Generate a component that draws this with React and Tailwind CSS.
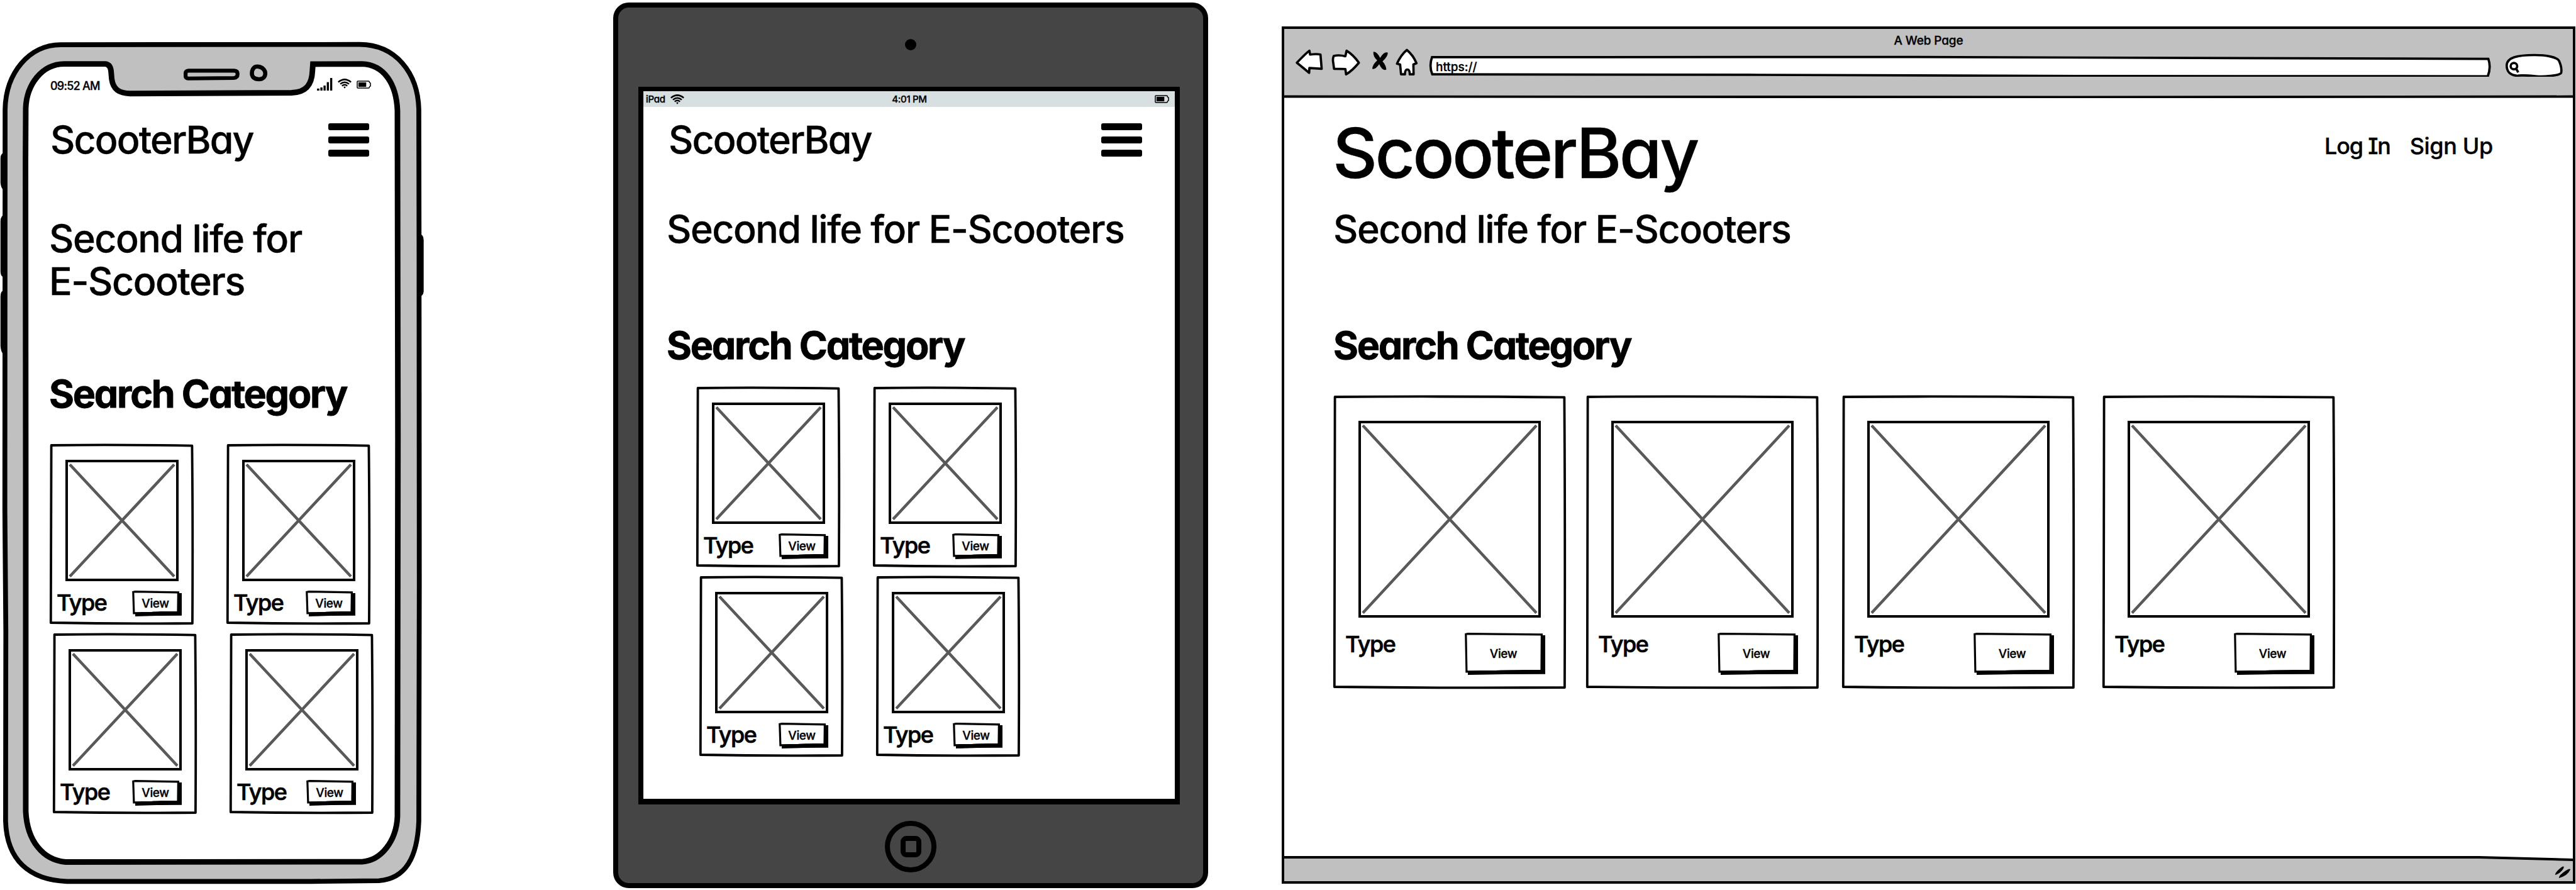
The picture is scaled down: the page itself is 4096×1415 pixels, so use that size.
import React from "react";

function Wifi() {
  return (
    <svg className="h-[16px] w-[22px]" viewBox="0 0 22 16" fill="none" stroke="#000" strokeWidth="2.5">
      <path d="M0.8 5.6 Q11 -2.8 21.2 5.6" />
      <path d="M4 8.6 Q11 2.8 18 8.6" />
      <path d="M6.8 11.6 Q11 8 15.2 11.6" />
      <path d="M9.2 13.2 Q11 12 12.8 13.2 L11 15.8Z" fill="#000" stroke="none" />
    </svg>
  );
}

function Battery() {
  return (
    <svg className="h-[13px] w-[23px]" viewBox="0 0 23 13" fill="none" stroke="#000">
      <path d="M2 1 H19 Q20.4 1 20.4 3 L22 4.2 V8.8 L20.4 10 Q20.4 12 19 12 H2 Q1 12 1 11 V2 Q1 1 2 1Z" strokeWidth="1.5" />
      <rect x="2.9" y="2.9" width="12.4" height="7.2" fill="#000" stroke="none" />
    </svg>
  );
}

function Signal() {
  return (
    <svg className="h-[20px] w-[25px]" viewBox="0 0 25 20">
      <rect x="0" y="16.8" width="3.8" height="3.2" />
      <rect x="5.4" y="15" width="3.4" height="5" />
      <rect x="10.4" y="12" width="3.4" height="8" />
      <rect x="15.6" y="6.6" width="3.4" height="13.4" />
      <rect x="20.9" y="0" width="3.4" height="20" />
    </svg>
  );
}

function Hamburger() {
  return (
    <div className="mt-[4px] flex w-[65px] flex-col gap-[10px]">
      <div className="h-[11px] rounded-[3px] bg-black" />
      <div className="h-[11px] rounded-[3px] bg-black" />
      <div className="h-[11px] rounded-[3px] bg-black" />
    </div>
  );
}

function SketchBorder({ w, h }) {
  const d = `M2.6 2 Q${w * 0.45} 0.7 ${w - 2.6} 2.6 Q${w - 1.2} ${h * 0.45} ${w - 2.1} ${h - 2} Q${w * 0.5} ${h - 0.8} 1.8 ${h - 3} Q2.6 ${h * 0.5} 2.6 2Z`;
  return (
    <svg className="absolute inset-0 h-full w-full overflow-visible" viewBox={`0 0 ${w} ${h}`} fill="none" stroke="#000" strokeWidth="3.8" strokeLinejoin="round">
      <path d={d} />
    </svg>
  );
}

function Placeholder({ w, h, className }) {
  return (
    <div className={"border-4 border-black " + className}>
      <svg className="h-full w-full" viewBox={`4 4 ${w - 8} ${h - 8}`} stroke="#595959" strokeWidth="4.6">
        <path d={`M7 7.5 L${w - 7} ${h - 7.5} M${w - 7} 7.5 L7 ${h - 7.5}`} />
      </svg>
    </div>
  );
}

function ViewButton({ w, h, className }) {
  return (
    <button className={"relative flex justify-center pr-[5px] text-[19px] leading-none tracking-[-0.02em] " + className}>
      <svg className="absolute inset-0 h-full w-full" viewBox={`0 0 ${w} ${h}`}>
        <path d={`M5 4 H${w} V${h - 1.2} L${w * 0.5} ${h - 1} L5 ${h}Z`} />
        <path
          d={`M1.8 2.3 L5 1.6 L${w - 5.6} 2.8 L${w - 6} ${h - 6.4} Q${w * 0.5} ${h - 6.8} ${w * 0.4} ${h - 5.6} L2.9 ${h - 5.2}Z`}
          fill="#fff"
          stroke="#000"
          strokeWidth="3.2"
        />
      </svg>
      <span className="relative">View</span>
    </button>
  );
}

function SmallCard({ shift }) {
  return (
    <div className="relative h-[287px] w-[229px] pt-[25px]">
      <SketchBorder w={229} h={287} />
      <Placeholder w={180} h={193} className="ml-[25px] h-[193px] w-[180px]" />
      <div className={"mt-[15px] flex justify-between pl-[11px] " + shift}>
        <span className="pt-px text-[36px] leading-none tracking-[-0.042em] [-webkit-text-stroke:0.7px_#000]">Type</span>
        <ViewButton w={79} h={41} className="h-[41px] w-[79px] pt-[11px]" />
      </div>
    </div>
  );
}

function SmallCardRows() {
  return (
    <div className="flex flex-col gap-[14px]">
      <div className="flex gap-[52px]">
        <SmallCard shift="pr-[19px]" />
        <SmallCard shift="pr-[24px]" />
      </div>
      <div className="flex gap-[52px] pl-[5px]">
        <SmallCard shift="pr-[24px]" />
        <SmallCard shift="pr-[28px]" />
      </div>
    </div>
  );
}

function LargeCard() {
  return (
    <div className="relative h-[466px] w-[370px] pt-[40px]">
      <SketchBorder w={370} h={466} />
      <Placeholder w={290} h={313} className="ml-[40px] h-[313px] w-[290px]" />
      <div className="mt-[24px] flex justify-between pr-[33px] pl-[19px]">
        <span className="text-[36px] leading-none tracking-[-0.042em] [-webkit-text-stroke:0.7px_#000]">Type</span>
        <ViewButton w={128} h={67} className="h-[67px] w-[128px] pt-[24px]" />
      </div>
    </div>
  );
}

function PhoneFrame() {
  return (
    <svg className="absolute top-0 left-0 h-[1415px] w-[680px]" viewBox="0 0 880.2 1831.6" fill="none" stroke="#000" strokeWidth="10">
      <path d="M12 313 Q1 314 1 326 V376 Q2 386 6 390 H12Z M12 441 Q1 442 1 456 V558 Q1 568 6 570 H12Z M12 596 Q1 597 1 610 V712 Q2 724 6 728 H12Z M860 481 Q872 481 872 494 V600 Q871 609 864 610 H860Z" fill="#000" stroke="none" />
      <path d="M10.500 225 C12 150 60 92 125 92 L740 91.500 C815 92 860 150 862 225 L862.500 500 L863 1200 L862 1690 C859 1765 835 1808 780 1812.500 L640 1814 L138 1814 C60 1811 14 1770 11.500 1690 L12 1300 L10 1050Z" fill="#c0c0c0" />
      <path
        d="M53 222 C55 175 85 132 132 131.500 L216 131.500 Q227 132 228.500 146 L230 163 C233 184 245 192 268 192.500 L600 191 C632 190 642 172 643 146 L644 132 L745 131.500 C790 133 816 172 818 228 L819 900 L818 1680 C816 1730 785 1771 745 1773.500 L135 1774 C88 1770 56 1730 53 1670 L53 1000 L52.500 330Z"
        fill="#fff"
        strokeWidth="11.500"
      />
      <path d="M388 145.500 H482 Q489 146 489 152 Q489 160 481 160.500 L388 161.500 Q382 161 382 157 V151 Q382 146 388 145.500Z" strokeWidth="8" />
      <path d="M531 137 C540 138 546 144 546 151 C546 158 541 163 533 163 C523 163 518 158 518.500 150 C519 141 524 136 531 137Z" strokeWidth="8.500" />
    </svg>
  );
}

function Phone() {
  return (
    <section className="relative h-[1415px] w-[680px] shrink-0">
      <PhoneFrame />
      <div className="relative pt-[124px]">
        <div className="flex h-[20px] items-start justify-between pr-[90px] pl-[80px]">
          <span className="pt-[4px] text-[18px] leading-none tracking-[-0.042em]">09:52 AM</span>
          <div className="flex h-[20px] gap-[8px]">
            <Signal />
            <span className="pt-[1px]"><Wifi /></span>
            <span className="pt-[4px]"><Battery /></span>
          </div>
        </div>
        <div className="mt-[48px] flex justify-between pr-[93px] pl-[80px]">
          <h1 className="text-[61px] leading-none tracking-[-0.031em]">ScooterBay</h1>
          <Hamburger />
        </div>
        <p className="mt-[92px] pl-[78px] text-[61px] leading-[68px] tracking-[-0.0245em]">
          Second life for
          <br />
          E-Scooters
        </p>
        <h2 className="mt-[115px] pl-[78px] text-[61px] leading-none font-bold tracking-[-0.0365em] [-webkit-text-stroke:0.8px_#000]">Search Category</h2>
        <div className="mt-[49px] pl-[79px]">
          <SmallCardRows />
        </div>
      </div>
    </section>
  );
}

function Tablet() {
  return (
    <section className="mt-[4px] ml-[295px] flex h-[1408px] w-[946px] shrink-0 flex-col items-center rounded-[25px] border-8 border-black bg-[#454545]">
      <div className="h-[126px] w-[18px] pt-[50px]">
        <div className="h-[18px] w-[18px] rounded-full bg-black" />
      </div>
      <div className="mr-[5px] h-[1141px] w-[861px] border-x-8 border-t-[7px] border-b-[9px] border-black bg-white">
        <div className="grid h-[25px] grid-cols-3 items-center bg-[#d7dfe1] pr-[9px] pl-[4px] text-[15px] leading-none tracking-[-0.02em]">
          <div className="flex items-center gap-[8px]">
            <span>iPad</span>
            <Wifi />
          </div>
          <span className="pl-[6px] text-center">4:01 PM</span>
          <div className="flex justify-end">
            <Battery />
          </div>
        </div>
        <div className="mt-[22px] flex justify-between pr-[52px] pl-[40px]">
          <h1 className="text-[61px] leading-none tracking-[-0.031em]">ScooterBay</h1>
          <Hamburger />
        </div>
        <p className="mt-[81px] pl-[37px] text-[61px] leading-none tracking-[-0.0245em] whitespace-nowrap">Second life for E-Scooters</p>
        <h2 className="mt-[124px] pl-[37px] text-[61px] leading-none font-bold tracking-[-0.0365em] [-webkit-text-stroke:0.8px_#000]">Search Category</h2>
        <div className="mt-[35px] pl-[84px]">
          <SmallCardRows />
        </div>
      </div>
      <div className="mt-[26px] flex h-[82px] w-[82px] items-center justify-center rounded-full border-8 border-black">
        <div className="h-[34px] w-[33px] rounded-[9px] border-8 border-black" />
      </div>
    </section>
  );
}

function BrowserHeader() {
  return (
    <header className="relative h-[110px] shrink-0 bg-[#c1c1c1] pt-[9px]">
      <div className="text-center text-[19px] leading-none tracking-[-0.008em]">A Web Page</div>
      <div className="mt-[2px] flex h-[46px] pl-[16px]">
        <svg className="w-[48px]" viewBox="2664 98 62 60" fill="#fff" stroke="#000" strokeWidth="4.8" strokeLinejoin="round">
          <path d="M2669 129 Q2686 111 2695 104 L2696.500 112 Q2710 110 2718 112 L2720.500 141.500 L2695 140 L2694.500 150 Q2684 141 2669 129Z" />
        </svg>
        <svg className="ml-[9px] w-[50px]" viewBox="2738 98 64 60" fill="#fff" stroke="#000" strokeWidth="4.800" strokeLinejoin="round">
          <path d="M2797 129 Q2786 113 2771.500 104 L2769 115.500 Q2755 112 2745 115 Q2742 120 2744 130 L2745.500 141.500 L2769 142 L2770.500 153 Q2783 146 2797 129Z" />
        </svg>
        <svg className="ml-[14px] w-[31px]" viewBox="2820 98 40 60">
          <path d="M2826 106 Q2834 106 2840 119 Q2848 105 2856 108 Q2856 116 2845 126 Q2852 134 2853 143 Q2845 147 2838 132 Q2831 143 2824 142 Q2823 134 2834 124 Q2825 116 2826 106Z" />
        </svg>
        <svg className="ml-[7px] w-[40px]" viewBox="2870 98 52 60" fill="#fff" stroke="#000" strokeWidth="4.800" strokeLinejoin="round">
          <path d="M2896 102.500 Q2909 113 2916 130 L2909.500 132.500 L2910 153 H2902 Q2902 143 2897 143 Q2892 143 2892 153 H2884 L2882 132.500 L2875.500 131 Q2884 112 2896 102.500Z" />
        </svg>
        <div className="relative ml-[15px] w-[1690px] pt-[21px] pl-[11px]">
          <svg className="absolute inset-0 h-full w-full" viewBox="2942 98 2188 60" preserveAspectRatio="none" fill="#fff" stroke="#000" strokeWidth="4.800">
            <path d="M2948.500 117.500 L3900 117 L5123 121 Q5129 138 5122 157 L4300 156.500 L3600 154 L2949 153 Q2942 136 2948.500 117.500Z" />
          </svg>
          <span className="relative block text-[19px] leading-none">https://</span>
        </div>
        <svg className="ml-[17px] w-[101px]" viewBox="5152 98 130 60" fill="#fff" stroke="#000" strokeWidth="4.800">
          <path d="M5160 135 C5160 118 5182 113 5218 113 C5240 113 5266 117 5269 126 Q5275 140 5273 150 C5270 156 5235 158 5222 157 Q5190 154 5182 156 C5166 155 5160 146 5160 135Z" />
          <ellipse cx="5175" cy="136" rx="6.800" ry="6.500" />
          <path d="M5180 142 L5184 149" />
        </svg>
      </div>
      <svg className="absolute bottom-0 left-0 h-[8px] w-full" viewBox="0 0 2049 8" preserveAspectRatio="none">
        <path d="M0 6 C300 8 1400 7 2049 6 V8 H0Z" fill="#fff" />
        <path d="M0 5.500 C300 7 1400 6.500 2049 5.500" fill="none" stroke="#000" strokeWidth="3.800" />
      </svg>
    </header>
  );
}

function Browser() {
  return (
    <section className="mt-[42px] ml-[117px] flex h-[1363px] w-[2057px] shrink-0 flex-col border-4 border-black bg-white">
      <BrowserHeader />
      <div className="flex-1 pt-[32px]">
        <div className="flex justify-between pr-[127px] pl-[77px]">
          <h1 className="text-[110px] leading-none tracking-[-0.033em]">ScooterBay</h1>
          <nav className="flex gap-[31px] pt-[26px] text-[36px] leading-none [font-feature-settings:'cv11','cv08']">
            <a className="tracking-[-0.034em]">Log In</a>
            <a className="tracking-[-0.01em]">Sign Up</a>
          </nav>
        </div>
        <p className="mt-[36px] pl-[78px] text-[61px] leading-none tracking-[-0.0245em]">Second life for E-Scooters</p>
        <h2 className="mt-[124px] pl-[78px] text-[61px] leading-none font-bold tracking-[-0.0365em] [-webkit-text-stroke:0.8px_#000]">Search Category</h2>
        <div className="mt-[49px] flex pl-[78px]">
          <LargeCard />
          <div className="ml-[32px]"><LargeCard /></div>
          <div className="ml-[37px]"><LargeCard /></div>
          <div className="ml-[44px]"><LargeCard /></div>
        </div>
      </div>
      <svg className="h-[41px] w-full shrink-0" viewBox="0 0 2049 41">
        <path d="M0 3 H1900 L2049 7 V41 H0Z" fill="#c0c0c0" />
        <path d="M0 3 H1900 L2049 7" fill="none" stroke="#000" strokeWidth="4" />
        <path d="M2021 31 Q2020 27 2032 18 Q2036 16 2034 21 Q2029 29 2021 31Z M2027 36 Q2026 32 2038 24 Q2045 20 2045 22.500 Q2041 32 2027 36Z" />
      </svg>
    </section>
  );
}

export default function App() {
  return (
    <main className="flex h-[1415px] w-[4096px] items-start overflow-hidden bg-white font-['Inter',sans-serif] font-medium text-black [-webkit-text-stroke:0.35px_#000] [font-feature-settings:'cv11']">
      <Phone />
      <Tablet />
      <Browser />
    </main>
  );
}
